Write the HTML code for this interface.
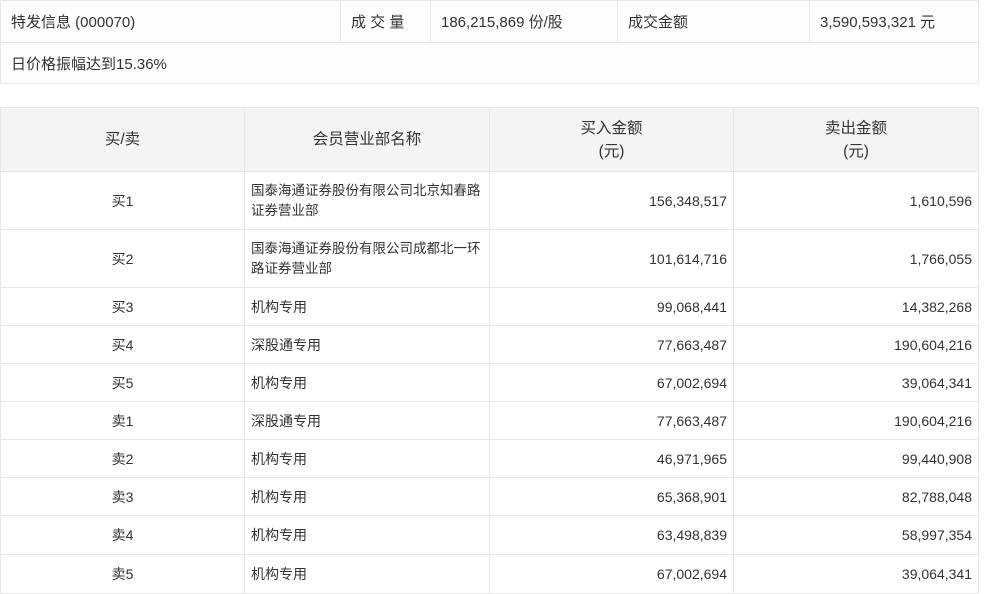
<!DOCTYPE html>
<html><head><meta charset="utf-8"><style>
body{margin:0;background:#fff;font-family:"Liberation Sans","Noto Sans CJK SC",sans-serif;color:#333;}
table{border-collapse:collapse;position:absolute;table-layout:fixed;}
td{border:1px solid #e8e8e8;box-sizing:border-box;padding:0;}
#t1{left:0;top:0;width:978px;background:#fdfdfb;font-size:15px;}
#t1 td{height:42px;padding-left:10px;}
#t2{left:0;top:107px;width:978px;font-size:14px;}
#t2 td{padding:0 6px;}
#t2 .h td{background:#f4f4f4;height:64px;text-align:center;font-size:15.5px;line-height:23px;}
.c{text-align:center}.r{text-align:right}
.n{font-size:13.5px}
</style></head><body>
<table id="t1">
<colgroup><col style="width:340px"><col style="width:90px"><col style="width:187px"><col style="width:192px"><col style="width:169px"></colgroup>
<tr><td>特发信息 (000070)</td><td>成 交 量</td><td>186,215,869 份/股</td><td>成交金额</td><td>3,590,593,321 元</td></tr>
<tr><td colspan="5" style="height:41px">日价格振幅达到15.36%</td></tr>
</table>
<table id="t2">
<colgroup><col style="width:244px"><col style="width:245px"><col style="width:244px"><col style="width:245px"></colgroup>
<tr class="h"><td>买/卖</td><td>会员营业部名称</td><td>买入金额<br>(元)</td><td>卖出金额<br>(元)</td></tr>
<tr style="height:58px"><td class="c">买1</td><td class="n" style="line-height:20px">国泰海通证券股份有限公司北京知春路证券营业部</td><td class="r">156,348,517</td><td class="r">1,610,596</td></tr>
<tr style="height:58px"><td class="c">买2</td><td class="n" style="line-height:20px">国泰海通证券股份有限公司成都北一环路证券营业部</td><td class="r">101,614,716</td><td class="r">1,766,055</td></tr>
<tr style="height:38px"><td class="c">买3</td><td>机构专用</td><td class="r">99,068,441</td><td class="r">14,382,268</td></tr>
<tr style="height:38px"><td class="c">买4</td><td>深股通专用</td><td class="r">77,663,487</td><td class="r">190,604,216</td></tr>
<tr style="height:38px"><td class="c">买5</td><td>机构专用</td><td class="r">67,002,694</td><td class="r">39,064,341</td></tr>
<tr style="height:38px"><td class="c">卖1</td><td>深股通专用</td><td class="r">77,663,487</td><td class="r">190,604,216</td></tr>
<tr style="height:38px"><td class="c">卖2</td><td>机构专用</td><td class="r">46,971,965</td><td class="r">99,440,908</td></tr>
<tr style="height:38px"><td class="c">卖3</td><td>机构专用</td><td class="r">65,368,901</td><td class="r">82,788,048</td></tr>
<tr style="height:39px"><td class="c">卖4</td><td>机构专用</td><td class="r">63,498,839</td><td class="r">58,997,354</td></tr>
<tr style="height:39px"><td class="c">卖5</td><td>机构专用</td><td class="r">67,002,694</td><td class="r">39,064,341</td></tr>
</table>
</body></html>
